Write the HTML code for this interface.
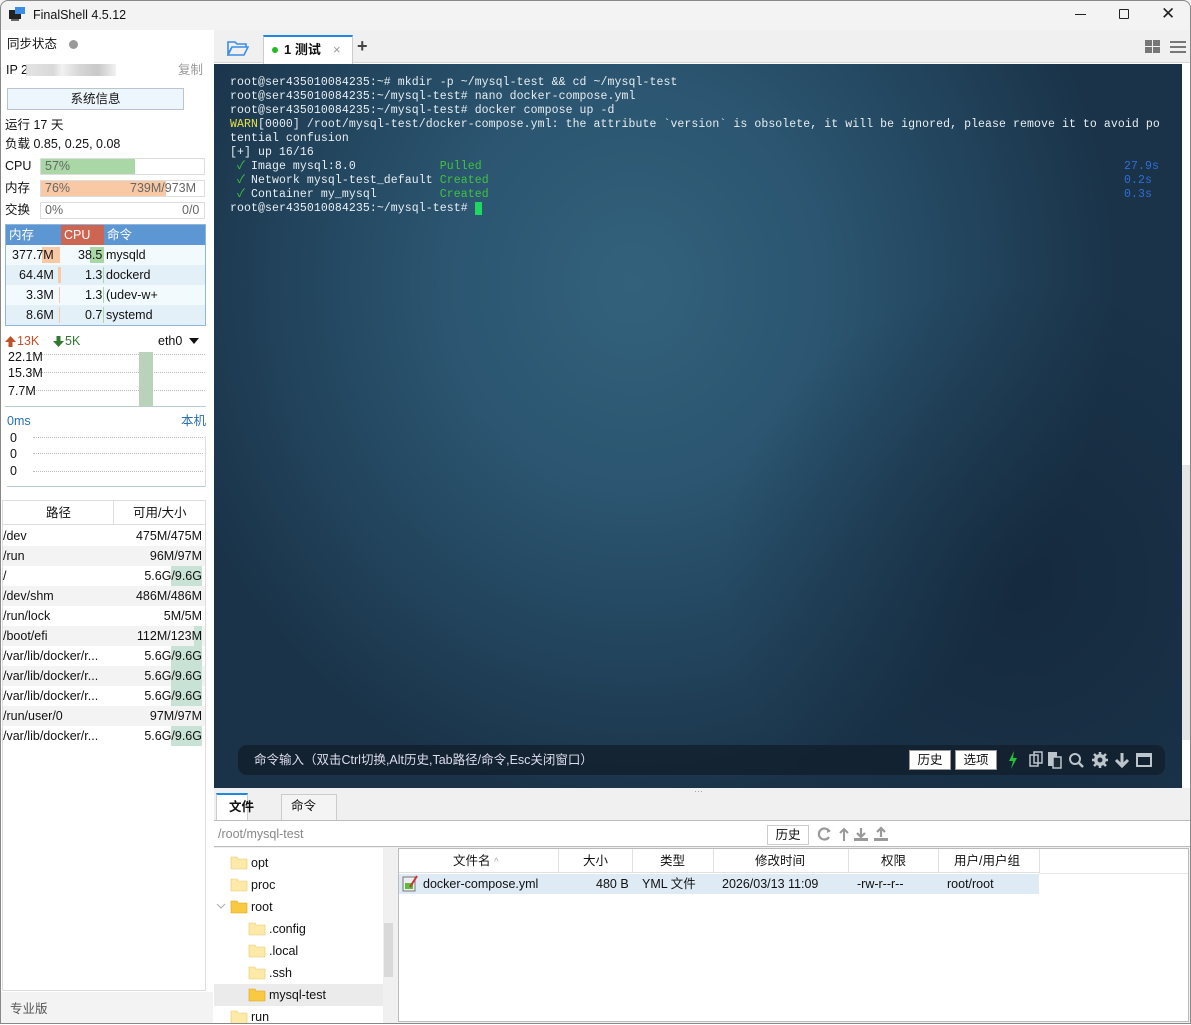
<!DOCTYPE html>
<html><head><meta charset="utf-8"><style>
*{margin:0;padding:0;box-sizing:border-box}
body{width:1191px;height:1024px;overflow:hidden;background:#fff;font-family:"Liberation Sans","Noto Sans CJK SC",sans-serif;font-size:12.5px;line-height:15px;color:#111;position:relative}
.a{position:absolute;white-space:nowrap;line-height:15px}
.term{font-family:"Liberation Mono","Noto Sans CJK SC",monospace;font-size:11.5px;line-height:14px;letter-spacing:.09px;color:#e8eef2;white-space:pre}
.ck{display:inline-block;width:6.99px;overflow:visible;color:#3fc43f}
.fs div{height:20px;line-height:20px;position:relative}
.fs div:nth-child(even){background:#f3f3f3}
.fs span{position:absolute;right:3px}
.fs b{position:absolute;right:3px;top:0;height:20px;background:#c9e2d6;font-weight:normal}
</style></head><body>
<!-- title bar -->
<div class="a" style="left:0;top:0;width:1191px;height:30px;background:#f3f3f3"></div>
<svg class="a" style="left:9px;top:7px" width="17" height="15"><rect x="0" y="3" width="12" height="9" fill="#222"/><rect x="6" y="0" width="10" height="7" fill="#3a8ee6"/><rect x="2" y="12" width="8" height="2" fill="#666"/></svg>
<div class="a" style="left:33px;top:8px;font-size:12.5px">FinalShell 4.5.12</div>
<div class="a" style="left:1075px;top:14px;width:11px;height:1px;background:#222"></div>
<div class="a" style="left:1119px;top:9px;width:10px;height:10px;border:1px solid #222;border-radius:1px"></div>
<div class="a" style="left:1161px;top:6px;font-size:17px;color:#222">✕</div>

<!-- left panel -->
<div class="a" style="left:7px;top:37px;font-size:12.5px">同步状态</div>
<div class="a" style="left:69px;top:40px;width:9px;height:9px;border-radius:50%;background:#999"></div>
<div class="a" style="left:6px;top:63px">IP 2</div>
<div class="a" style="left:26px;top:64px;width:90px;height:12px;background:linear-gradient(90deg,#ddd,#cfcfcf 30%,#eee 40%,#ccc 60%,#bbb 80%,#eee);opacity:.8"></div>
<div class="a" style="left:178px;top:63px;color:#999">复制</div>
<div class="a" style="left:7px;top:88px;width:177px;height:22px;border:1px solid #b8c4d0;background:#eef6fd;text-align:center;line-height:20px">系统信息</div>
<div class="a" style="left:5px;top:118px">运行 17 天</div>
<div class="a" style="left:5px;top:137px">负载 0.85, 0.25, 0.08</div>
<div class="a" style="left:5px;top:159px">CPU</div>
<div class="a" style="left:40px;top:158px;width:165px;height:17px;border:1px solid #ddd"><div style="width:94px;height:15px;background:#a9d8a6"></div></div>
<div class="a" style="left:45px;top:159px;color:#666">57%</div>
<div class="a" style="left:5px;top:181px">内存</div>
<div class="a" style="left:40px;top:180px;width:165px;height:17px;border:1px solid #ddd"><div style="width:125px;height:15px;background:#f8c9a4"></div></div>
<div class="a" style="left:45px;top:181px;color:#666">76%</div>
<div class="a" style="left:130px;top:181px;color:#666">739M/973M</div>
<div class="a" style="left:5px;top:203px">交换</div>
<div class="a" style="left:40px;top:202px;width:165px;height:17px;border:1px solid #ddd"></div>
<div class="a" style="left:45px;top:203px;color:#666">0%</div>
<div class="a" style="left:182px;top:203px;color:#666">0/0</div>
<!-- process table -->
<div class="a" style="left:5px;top:224px;width:201px;height:102px;border:1px solid #8fb6dd;background:#f2fafd"></div>
<div class="a" style="left:6px;top:225px;width:199px;height:20px;background:#5d97d3"></div>
<div class="a" style="left:61px;top:225px;width:43px;height:20px;background:#cc6652"></div>
<div class="a" style="left:9px;top:228px;color:#fff">内存</div>
<div class="a" style="left:64px;top:228px;color:#fff">CPU</div>
<div class="a" style="left:107px;top:228px;color:#fff">命令</div>
<div class="a" style="left:6px;top:265px;width:199px;height:20px;background:#e3f0f7"></div>
<div class="a" style="left:6px;top:305px;width:199px;height:20px;background:#e3f0f7"></div>
<div class="a" style="left:42px;top:247px;width:18px;height:16px;background:#f8c9a4"></div>
<div class="a" style="left:58px;top:267px;width:3px;height:16px;background:#f8c9a4"></div>
<div class="a" style="left:59px;top:287px;width:1px;height:16px;background:#f8c9a4"></div>
<div class="a" style="left:59px;top:307px;width:1px;height:16px;background:#f8c9a4"></div>
<div class="a" style="left:90px;top:247px;width:14px;height:16px;background:#a9d8a6"></div>
<div class="a" style="left:103px;top:267px;width:1px;height:16px;background:#a9d8a6"></div>
<div class="a" style="left:103px;top:287px;width:1px;height:16px;background:#a9d8a6"></div>
<div class="a" style="left:103px;top:307px;width:1px;height:16px;background:#a9d8a6"></div>
<div class="a" style="left:12px;top:248px">377.7M</div><div class="a" style="left:78px;top:248px">38.5</div><div class="a" style="left:106px;top:248px">mysqld</div>
<div class="a" style="left:19px;top:268px">64.4M</div><div class="a" style="left:85px;top:268px">1.3</div><div class="a" style="left:106px;top:268px">dockerd</div>
<div class="a" style="left:26px;top:288px">3.3M</div><div class="a" style="left:85px;top:288px">1.3</div><div class="a" style="left:106px;top:288px">(udev-w+</div>
<div class="a" style="left:26px;top:308px">8.6M</div><div class="a" style="left:85px;top:308px">0.7</div><div class="a" style="left:106px;top:308px">systemd</div>
<!-- net -->
<svg class="a" style="left:5px;top:336px" width="11" height="11"><path d="M5.5 0L0 6h3.5v5h4V6H11z" fill="#c0502a"/></svg>
<div class="a" style="left:17px;top:334px;color:#c0502a">13K</div>
<svg class="a" style="left:53px;top:336px" width="11" height="11"><path d="M5.5 11L0 5h3.5V0h4v5H11z" fill="#2f7a2f"/></svg>
<div class="a" style="left:65px;top:334px;color:#2f7a2f">5K</div>
<div class="a" style="left:158px;top:334px">eth0</div>
<svg class="a" style="left:189px;top:338px" width="10" height="6"><path d="M0 0h10L5 6z" fill="#111"/></svg>
<div class="a" style="left:30px;top:354px;width:175px;border-top:1px dotted #bbb"></div>
<div class="a" style="left:30px;top:372px;width:175px;border-top:1px dotted #bbb"></div>
<div class="a" style="left:30px;top:390px;width:175px;border-top:1px dotted #bbb"></div>
<div class="a" style="left:8px;top:350px">22.1M</div>
<div class="a" style="left:8px;top:366px">15.3M</div>
<div class="a" style="left:8px;top:384px">7.7M</div>
<div class="a" style="left:139px;top:352px;width:14px;height:54px;background:#b9d3b8"></div>
<div class="a" style="left:5px;top:406px;width:201px;height:1px;background:#b8ccd8"></div>
<div class="a" style="left:7px;top:414px;color:#2a6fb5">0ms</div>
<div class="a" style="left:181px;top:414px;color:#2a6fb5">本机</div>
<div class="a" style="left:33px;top:437px;width:170px;border-top:1px dotted #bbb"></div>
<div class="a" style="left:33px;top:453px;width:170px;border-top:1px dotted #bbb"></div>
<div class="a" style="left:33px;top:471px;width:170px;border-top:1px dotted #bbb"></div>
<div class="a" style="left:10px;top:431px">0</div>
<div class="a" style="left:10px;top:447px">0</div>
<div class="a" style="left:10px;top:464px">0</div>
<div class="a" style="left:7px;top:486px;width:199px;height:1px;background:#b8ccd8"></div>
<div class="a" style="left:205px;top:436px;width:1px;height:51px;background:#ddd"></div>
<!-- fs table -->
<div class="a" style="left:2px;top:500px;width:204px;height:491px;border:1px solid #ddd"></div>
<div class="a" style="left:3px;top:501px;width:202px;height:24px;border-bottom:1px solid #ddd"></div>
<div class="a" style="left:113px;top:501px;width:1px;height:24px;background:#ddd"></div>
<div class="a" style="left:46px;top:506px">路径</div>
<div class="a" style="left:133px;top:506px">可用/大小</div>
<div class="a fs" style="left:3px;top:526px;width:202px">
<div>/dev<span>475M/475M</span></div>
<div>/run<span>96M/97M</span></div>
<div>/<b style="width:31px"></b><span>5.6G/9.6G</span></div>
<div>/dev/shm<span>486M/486M</span></div>
<div>/run/lock<span>5M/5M</span></div>
<div>/boot/efi<b style="width:8px"></b><span>112M/123M</span></div>
<div>/var/lib/docker/r...<b style="width:31px"></b><span>5.6G/9.6G</span></div>
<div>/var/lib/docker/r...<b style="width:31px"></b><span>5.6G/9.6G</span></div>
<div>/var/lib/docker/r...<b style="width:31px"></b><span>5.6G/9.6G</span></div>
<div>/run/user/0<span>97M/97M</span></div>
<div>/var/lib/docker/r...<b style="width:31px"></b><span>5.6G/9.6G</span></div>
</div>
<div class="a" style="left:0;top:992px;width:213px;height:32px;background:#f3f3f3"></div>
<div class="a" style="left:10px;top:1002px;color:#555">专业版</div>

<!-- tab bar -->
<div class="a" style="left:214px;top:30px;width:977px;height:33px;background:#f0f0f0;border-bottom:1px solid #d8d8d8"></div>
<svg class="a" style="left:227px;top:40px" width="22" height="16"><path d="M1 2h7l2 2h9v3H5L1 14z M5 7h16l-4 8H1z" fill="none" stroke="#3a8ee6" stroke-width="1.6"/></svg>
<div class="a" style="left:263px;top:35px;width:90px;height:29px;background:#fff;border:1px solid #ccc;border-top:2px solid #1e88e5;border-bottom:none"></div>
<div class="a" style="left:272px;top:47px;width:6px;height:6px;border-radius:50%;background:#22bb22"></div>
<div class="a" style="left:284px;top:42px;font-weight:bold;font-size:13px">1 测试</div>
<div class="a" style="left:333px;top:42px;color:#999;font-size:13px">×</div>
<div class="a" style="left:357px;top:39px;color:#444;font-size:18px;font-weight:bold">+</div>
<div class="a" style="left:1145px;top:40px;width:7px;height:6px;background:#777"></div><div class="a" style="left:1153px;top:40px;width:7px;height:6px;background:#777"></div>
<div class="a" style="left:1145px;top:47px;width:7px;height:6px;background:#777"></div><div class="a" style="left:1153px;top:47px;width:7px;height:6px;background:#777"></div>
<div class="a" style="left:1170px;top:41px;width:16px;height:2px;background:#777;box-shadow:0 5px 0 #777,0 10px 0 #777"></div>

<!-- terminal -->
<div class="a" style="left:214px;top:64px;width:968px;height:724px;background:radial-gradient(ellipse 480px 520px at 420px 220px,#33617b 0%,#2b5570 40%,#21425a 75%,#1a3349 100%)"></div>
<div class="a" style="left:600px;top:250px;width:582px;height:538px;background:radial-gradient(ellipse 300px 300px at 420px 330px,rgba(15,30,48,.45),rgba(0,0,0,0))"></div>
<div class="a" style="left:1182px;top:64px;width:9px;height:724px;background:#fff"></div>
<div class="a" style="left:1182px;top:465px;width:9px;height:275px;background:#e5e5e5"></div>
<div class="a term" style="left:230px;top:76px">root@ser435010084235:~# mkdir -p ~/mysql-test &amp;&amp; cd ~/mysql-test
root@ser435010084235:~/mysql-test# nano docker-compose.yml
root@ser435010084235:~/mysql-test# docker compose up -d
<span style="color:#e6e04a">WARN</span>[0000] /root/mysql-test/docker-compose.yml: the attribute `version` is obsolete, it will be ignored, please remove it to avoid po
tential confusion
[+] up 16/16
 <span class="ck">✓</span> Image mysql:8.0            <span style="color:#3fc43f">Pulled</span>
 <span class="ck">✓</span> Network mysql-test_default <span style="color:#3fc43f">Created</span>
 <span class="ck">✓</span> Container my_mysql         <span style="color:#3fc43f">Created</span>
root@ser435010084235:~/mysql-test# <span style="background:#1ed760"> </span></div>
<div class="a term" style="left:1124px;top:160px;color:#2e6fd8">27.9s
0.2s
0.3s</div>
<!-- command bar -->
<div class="a" style="left:238px;top:745px;width:927px;height:30px;border-radius:9px;background:rgba(18,30,42,.75)"></div>
<div class="a" style="left:254px;top:753px;color:#dde;font-size:12.5px">命令输入（双击Ctrl切换,Alt历史,Tab路径/命令,Esc关闭窗口）</div>
<div class="a" style="left:909px;top:750px;width:42px;height:20px;background:#fff;border:1px solid #999;text-align:center;line-height:18px">历史</div>
<div class="a" style="left:955px;top:750px;width:42px;height:20px;background:#fff;border:1px solid #999;text-align:center;line-height:18px">选项</div>
<svg class="a" style="left:1005px;top:750px" width="150" height="20">
<path d="M9 1L4 11h4L6 19 12 8H8z" fill="#22c33a"/>
<rect x="25" y="5" width="8" height="11" fill="none" stroke="#bcc4cc" stroke-width="1.5"/><rect x="29" y="2" width="8" height="11" fill="none" stroke="#bcc4cc" stroke-width="1.5"/>
<rect x="43" y="2" width="9" height="14" fill="#bcc4cc"/><rect x="48" y="7" width="8" height="11" fill="#1c2a38" stroke="#bcc4cc" stroke-width="1.5"/>
<circle cx="70" cy="9" r="5" fill="none" stroke="#bcc4cc" stroke-width="2"/><path d="M74 13l4 4" stroke="#bcc4cc" stroke-width="2.5"/>
<circle cx="95" cy="10" r="6" fill="#bcc4cc"/><path d="M95 2v16M87 10h16M89 4l12 12M101 4L89 16" stroke="#bcc4cc" stroke-width="2.5"/><circle cx="95" cy="10" r="2.5" fill="#1c2a38"/>
<path d="M117 3v12M111 10l6 6 6-6" stroke="#bcc4cc" stroke-width="3" fill="none"/>
<rect x="132" y="4" width="14" height="12" fill="none" stroke="#bcc4cc" stroke-width="2"/><rect x="132" y="4" width="14" height="3" fill="#bcc4cc"/>
</svg>
<div class="a" style="left:214px;top:788px;width:977px;height:236px;background:#f0f0f0"></div>
<div class="a" style="left:694px;top:784px;color:#999;font-size:9px">···</div>
<!-- bottom tabs -->
<div class="a" style="left:216px;top:793px;width:32px;height:28px;background:#fff;border:1px solid #ccc;border-top:2px solid #1e88e5;border-bottom:none"></div>
<div class="a" style="left:229px;top:800px;font-weight:bold">文件</div>
<div class="a" style="left:281px;top:794px;width:56px;height:26px;background:#f4f4f4;border:1px solid #ccc;border-bottom:none"></div>
<div class="a" style="left:291px;top:799px">命令</div>
<div class="a" style="left:214px;top:820px;width:977px;height:1px;background:#bbb"></div>
<div class="a" style="left:214px;top:821px;width:977px;height:26px;background:#fff;border-bottom:1px solid #bbb"></div>
<div class="a" style="left:218px;top:827px;color:#888">/root/mysql-test</div>
<div class="a" style="left:767px;top:825px;width:42px;height:20px;background:#fff;border:1px solid #ccc;text-align:center;line-height:18px">历史</div>
<svg class="a" style="left:817px;top:826px" width="75" height="16">
<path d="M12 5A5.5 5.5 0 1 0 12 11" fill="none" stroke="#999" stroke-width="2.2"/><path d="M10 2l4 3-4 2z" fill="#999"/>
<path d="M27 15V4M23 7l4-4 4 4" stroke="#999" stroke-width="2" fill="none"/>
<path d="M44 2v8M40 7l4 4 4-4" stroke="#999" stroke-width="2.2" fill="none"/><rect x="37" y="12" width="14" height="3" fill="#999"/>
<path d="M64 11V3M60 6l4-4 4 4" stroke="#999" stroke-width="2.2" fill="none"/><rect x="57" y="12" width="14" height="3" fill="#999"/>
</svg>
<!-- tree -->
<div class="a" style="left:214px;top:848px;width:170px;height:176px;background:#fff"></div>
<div class="a" style="left:214px;top:984px;width:169px;height:22px;background:#ebebeb"></div>
<div class="a" style="left:383px;top:848px;width:11px;height:176px;background:#f0f0f0"></div>
<div class="a" style="left:384px;top:923px;width:9px;height:54px;background:#d9d9d9"></div>
<svg class="a" style="left:216px;top:903px" width="10" height="6"><path d="M1 1l4 4 4-4" stroke="#aaa" fill="none"/></svg>
<svg class="a" style="left:0;top:0" width="400" height="1024">
<g fill="#fde9a8" stroke="#e8c76a" stroke-width=".6">
<path d="M231 857h6l1 2h9v10h-16z"/><path d="M231 879h6l1 2h9v10h-16z"/>
<path d="M249 923h6l1 2h9v10h-16z"/><path d="M249 945h6l1 2h9v10h-16z"/><path d="M249 967h6l1 2h9v10h-16z"/>
<path d="M231 1011h6l1 2h9v11h-16z"/></g>
<g fill="#f9c941" stroke="#dca21e" stroke-width=".6"><path d="M231 901h6l1 2h9v10h-16z"/><path d="M249 989h6l1 2h9v10h-16z"/></g>
</svg>
<div class="a" style="left:251px;top:856px">opt</div>
<div class="a" style="left:251px;top:878px">proc</div>
<div class="a" style="left:251px;top:900px">root</div>
<div class="a" style="left:269px;top:922px">.config</div>
<div class="a" style="left:269px;top:944px">.local</div>
<div class="a" style="left:269px;top:966px">.ssh</div>
<div class="a" style="left:269px;top:988px">mysql-test</div>
<div class="a" style="left:251px;top:1010px">run</div>
<!-- file table -->
<div class="a" style="left:398px;top:848px;width:791px;height:174px;background:#fff;border:1px solid #bbb"></div>
<div class="a" style="left:399px;top:849px;width:640px;height:24px;border-bottom:1px solid #e0e0e0"></div>
<div class="a" style="left:1039px;top:873px;width:149px;height:1px;background:#e6e6e6"></div>
<div class="a" style="left:558px;top:849px;width:1px;height:24px;background:#e0e0e0"></div>
<div class="a" style="left:632px;top:849px;width:1px;height:24px;background:#e0e0e0"></div>
<div class="a" style="left:713px;top:849px;width:1px;height:24px;background:#e0e0e0"></div>
<div class="a" style="left:848px;top:849px;width:1px;height:24px;background:#e0e0e0"></div>
<div class="a" style="left:938px;top:849px;width:1px;height:24px;background:#e0e0e0"></div>
<div class="a" style="left:1039px;top:849px;width:1px;height:24px;background:#e0e0e0"></div>
<div class="a" style="left:453px;top:854px">文件名 <span style="color:#aaa;font-size:10px">^</span></div>
<div class="a" style="left:583px;top:854px">大小</div>
<div class="a" style="left:660px;top:854px">类型</div>
<div class="a" style="left:755px;top:854px">修改时间</div>
<div class="a" style="left:881px;top:854px">权限</div>
<div class="a" style="left:954px;top:854px">用户/用户组</div>
<div class="a" style="left:399px;top:874px;width:640px;height:20px;background:#deeaf4"></div>
<svg class="a" style="left:402px;top:875px" width="16" height="17"><rect x="1" y="2" width="12" height="14" fill="#eee" stroke="#777"/><rect x="3" y="8" width="8" height="6" fill="#5bbf3a"/><path d="M8 12L15 1" stroke="#c33" stroke-width="2"/></svg>
<div class="a" style="left:423px;top:877px">docker-compose.yml</div>
<div class="a" style="left:596px;top:877px">480 B</div>
<div class="a" style="left:642px;top:877px">YML 文件</div>
<div class="a" style="left:722px;top:877px">2026/03/13 11:09</div>
<div class="a" style="left:857px;top:877px">-rw-r--r--</div>
<div class="a" style="left:947px;top:877px">root/root</div>
<div class="a" style="left:0;top:0;width:1191px;height:1024px;border:1px solid #888;border-radius:8px 8px 0 0;pointer-events:none"></div>
</body></html>
